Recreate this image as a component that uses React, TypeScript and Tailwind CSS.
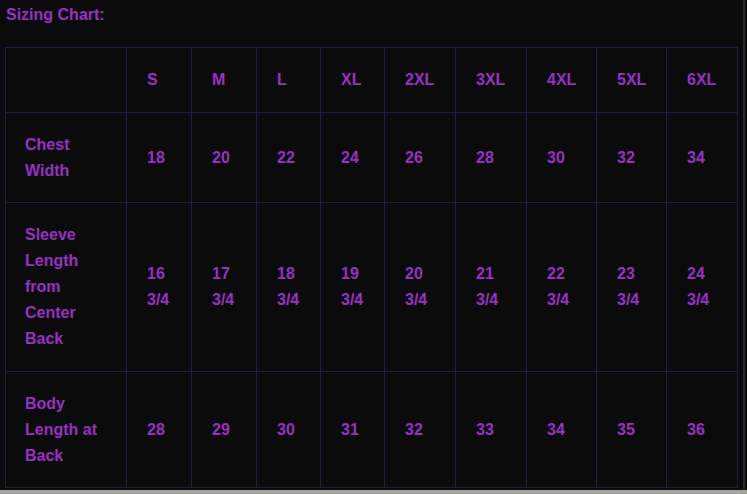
import React from "react";

const sizes = ["S", "M", "L", "XL", "2XL", "3XL", "4XL", "5XL", "6XL"];
const widths = ["w-[121px]", "w-[65px]", "w-[65px]", "w-[64px]", "w-[64px]", "w-[71px]", "w-[71px]", "w-[70px]", "w-[70px]", "w-[71px]"];

const rows: { h: string; label: string[]; values: string[][] }[] = [
  { h: "h-[90px]", label: ["Chest", "Width"], values: ["18", "20", "22", "24", "26", "28", "30", "32", "34"].map((v) => [v]) },
  {
    h: "h-[169px]",
    label: ["Sleeve", "Length", "from", "Center", "Back"],
    values: ["16", "17", "18", "19", "20", "21", "22", "23", "24"].map((v) => [v, "3/4"]),
  },
  { h: "h-[116px]", label: ["Body", "Length at", "Back"], values: ["28", "29", "30", "31", "32", "33", "34", "35", "36"].map((v) => [v]) },
];

const cell = "border border-[#261a45] pl-[20px] pr-[8px] py-[16px] align-middle text-left";
const first = "border border-[#261a45] pl-[19px] pr-[8px] py-[16px] align-middle text-left";

export default function App() {
  return (
    <div className="w-[747px] h-[494px] bg-[#0c0b0c] flex flex-col font-['Liberation_Sans',Arial,sans-serif] font-bold text-[16px] leading-[26px] text-[#9731c4] overflow-hidden">
      <div className="flex-1 flex">
        <div className="flex-1 pl-[5px]">
          <div className="pt-[2px] pl-[1px] h-[47px]">Sizing Chart:</div>
          <table className="border-collapse table-fixed w-[733px]">
            <colgroup>
              {widths.map((w, i) => (
                <col key={i} className={w} />
              ))}
            </colgroup>
            <tbody>
              <tr className="h-[65px]">
                <td className={first}></td>
                {sizes.map((s) => (
                  <td key={s} className={cell}>
                    {s}
                  </td>
                ))}
              </tr>
              {rows.map((r, i) => (
                <tr key={i} className={r.h}>
                  <td className={first}>
                    {r.label.map((l) => (
                      <div key={l}>{l}</div>
                    ))}
                  </td>
                  {r.values.map((v, j) => (
                    <td key={j} className={cell}>
                      {v.map((t, k) => (
                        <div key={k}>{t}</div>
                      ))}
                    </td>
                  ))}
                </tr>
              ))}
            </tbody>
          </table>
        </div>
        <div className="w-[6px] flex">
          <div className="w-[2px] ml-[2px] bg-[#2a2a2a]" />
        </div>
      </div>
      <div className="h-[4px] bg-[#a3a39c]" />
    </div>
  );
}
